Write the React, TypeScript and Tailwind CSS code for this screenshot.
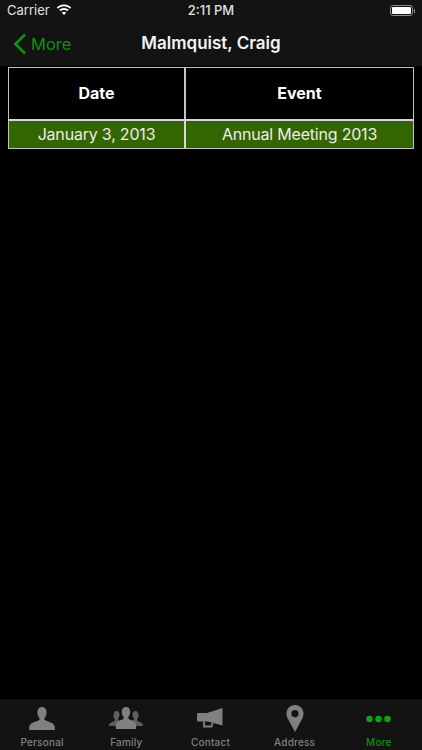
const font = "font-['Inter','Liberation_Sans',Arial,sans-serif]";

function PersonIcon() {
  return (
    <svg width="26" height="23" viewBox="0 0 26 23" fill="#808080">
      <path d="M13 0c3 0 4.600 2.300 4.600 5.200 0 2.600-1 4.800-2.300 6 0 1.200.4 2 1.800 2.600 3.500 1.300 7.500 2.300 8.400 5.200.3 1 .4 2 .4 4H.1c0-2 .1-3 .4-4 .9-2.900 4.900-3.900 8.400-5.200 1.400-.6 1.800-1.400 1.800-2.600-1.300-1.200-2.300-3.400-2.300-6C8.400 2.300 10 0 13 0z" />
    </svg>
  );
}

function FamilyIcon() {
  return (
    <svg width="34" height="23" viewBox="0 0 34 23">
      <g fill="#5e5e5e">
        <path d="M7.500 4c2 0 3 1.500 3 3.500 0 1.800-.7 3.200-1.500 4 0 1 .5 1.500 1.500 2L8 19H0c0-1.500.2-2 1-2.700 1-1 3-1.500 4.200-2.300.6-.4.8-1 .8-1.600-.9-1-1.500-2.300-1.500-4C4.500 5.500 5.500 4 7.500 4z" />
        <path d="M26.500 4c-2 0-3 1.500-3 3.500 0 1.800.7 3.200 1.500 4 0 1-.5 1.500-1.500 2L26 19h8c0-1.500-.2-2-1-2.700-1-1-3-1.500-4.200-2.300-.6-.4-.8-1-.8-1.600.9-1 1.500-2.300 1.500-4C29.500 5.500 28.500 4 26.500 4z" />
      </g>
      <path fill="#808080" d="M17 0c3 0 4.200 2.200 4.200 4.800 0 2.300-.9 4.300-2 5.400 0 1.200.4 1.900 1.500 2.400 2.500 1.100 5.400 1.900 6.100 4.300.3 1.200.4 3.100.4 5.100H6.800c0-2 .1-3.900.4-5.100.7-2.400 3.600-3.200 6.100-4.300 1.100-.5 1.500-1.200 1.500-2.400-1.100-1.100-2-3.100-2-5.400C12.800 2.200 14 0 17 0z" />
    </svg>
  );
}

function MegaphoneIcon() {
  return (
    <svg width="26" height="22" viewBox="0 0 26 22">
      <path fill="#808080" d="M25.500 0v17.500L11 13.500H1L0 12.500V6l1-1h9z" />
      <path fill="none" stroke="#808080" strokeWidth="1.800" d="M7 13.500v5h7.500l1-3.500" />
    </svg>
  );
}

function PinIcon() {
  return (
    <svg width="18" height="27" viewBox="0 0 18 27">
      <path
        fill="#808080"
        fillRule="evenodd"
        d="M9 0c5 0 8.500 3.700 8.500 8.500 0 2-.6 3.800-1.500 5.500L9 27 2 14C1 12.300.5 10.500.5 8.500.5 3.700 4 0 9 0zm0 5a3.600 3.600 0 1 0 0 7.200A3.600 3.600 0 0 0 9 5z"
      />
    </svg>
  );
}

function DotsIcon() {
  return (
    <svg width="25" height="8" viewBox="0 0 25 8" fill="#11a011">
      <circle cx="3.500" cy="4" r="3.300" />
      <circle cx="12.500" cy="4" r="3.300" />
      <circle cx="21.500" cy="4" r="3.300" />
    </svg>
  );
}

function BackChevron() {
  return (
    <svg width="14" height="22" viewBox="0 0 14 22" fill="none" stroke="#0f8f0f" strokeWidth="2.800">
      <path d="M12 1.500 2.500 11l9.500 9.500" />
    </svg>
  );
}

function WifiIcon() {
  return (
    <svg width="16" height="12" viewBox="0 0 16 12" fill="#ffffff">
      <path d="M8 2.300c2.300 0 4.400.9 6 2.400l1.200-1.300C13.300 1.500 10.800.4 8 .4S2.700 1.500.8 3.400L2 4.700c1.600-1.500 3.700-2.400 6-2.400z" />
      <path d="M8 6c1.300 0 2.500.5 3.400 1.300l1.300-1.300C11.400 4.800 9.800 4.100 8 4.100S4.600 4.800 3.300 6l1.300 1.300C5.500 6.500 6.700 6 8 6z" />
      <path d="M8 7.800c-.9 0-1.700.3-2.200.9L8 11l2.200-2.300c-.5-.6-1.300-.9-2.200-.9z" />
    </svg>
  );
}

const tabs = [
  { label: "Personal", icon: <PersonIcon /> },
  { label: "Family", icon: <FamilyIcon /> },
  { label: "Contact", icon: <MegaphoneIcon /> },
  { label: "Address", icon: <PinIcon /> },
  { label: "More", icon: <DotsIcon />, active: true },
];

export default function App() {
  return (
    <div className={`${font} flex h-[750px] w-[422px] flex-col overflow-hidden bg-black text-white`}>
      {/* Status bar + nav */}
      <div className="h-[66px] shrink-0 bg-[#131313]">
        <div className="relative flex h-[22px] items-center px-[7px] text-[13px] text-[#e0e0e0]">
          <span>Carrier</span>
          <span className="ml-[6px] mb-[3px]">
            <WifiIcon />
          </span>
          <span className="absolute left-0 right-0 text-center font-medium">2:11 PM</span>
          <div className="absolute right-[7px] top-[5px] flex items-center">
            <div className="h-[11px] w-[23px] rounded-[3px] border border-[#8a8a8a] p-[1px]">
              <div className="h-full w-full rounded-[1px] bg-white" />
            </div>
            <div className="ml-[1px] h-[4px] w-[1px] bg-[#8a8a8a]" />
          </div>
        </div>
        <div className="relative flex h-[44px] items-center">
          <div className="ml-[13px] flex items-center gap-[4px] text-[#0f8f0f]">
            <BackChevron />
            <span className="text-[16.500px]">More</span>
          </div>
          <span className="absolute left-0 right-0 text-center text-[17px] font-semibold text-[#f4f4f4]">Malmquist, Craig</span>
        </div>
      </div>

      {/* Event table */}
      <div className="px-[8px] pt-[1px]">
        <div className="grid grid-cols-[177px_1fr] border border-[#c4c4c4] text-[16px]">
          <div className="flex h-[51px] items-center justify-center border-r-2 border-[#c4c4c4] pb-[1px] font-bold">Date</div>
          <div className="flex h-[51px] items-center justify-center pb-[1px] font-bold">Event</div>
          <div className="flex h-[29px] items-center justify-center border-r-2 border-t-2 border-[#d8d8d8] bg-[#336600] pb-[1px] tracking-[-0.2px] text-[#ececec]">January 3, 2013</div>
          <div className="flex h-[29px] items-center justify-center border-t-2 border-[#d8d8d8] bg-[#336600] pb-[1px] tracking-[-0.2px] text-[#ececec]">Annual Meeting 2013</div>
        </div>
      </div>

      <div className="flex-1" />

      {/* Tab bar */}
      <div className="grid h-[51px] shrink-0 grid-cols-[repeat(5,84.2px)] bg-[#131313]">
        {tabs.map((tab) => (
          <div key={tab.label} className="flex flex-col items-center">
            <div className="flex h-[37px] items-center justify-center pt-[2px]">{tab.icon}</div>
            <span className={`text-[10px] font-medium leading-[13px] tracking-[0.2px] ${tab.active ? "text-[#0f8f0f]" : "text-[#808080]"}`}>{tab.label}</span>
          </div>
        ))}
      </div>
    </div>
  );
}
